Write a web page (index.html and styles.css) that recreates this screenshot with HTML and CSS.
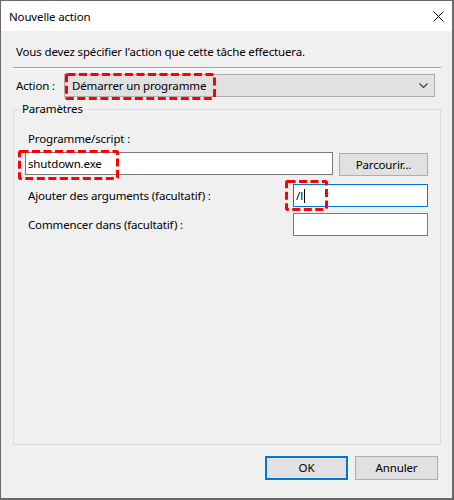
FILE: index.html
```html
<!DOCTYPE html>
<html lang="fr">
<head>
<meta charset="utf-8">
<title>Nouvelle action</title>
<link rel="stylesheet" href="styles.css">
</head>
<body>
<div class="window">
  <div class="titlebar">
    <span class="title">Nouvelle action</span>
    <svg class="close" width="11" height="11" viewBox="0 0 11 11"><path d="M0.5 0.5L10.5 10.5M10.5 0.5L0.5 10.5" stroke="#000" stroke-width="1" fill="none"/></svg>
  </div>
  <div class="body">
    <p class="desc">Vous devez spécifier l'action que cette tâche effectuera.</p>
    <div class="sep"></div>
    <div class="action-row">
      <span class="action-label">Action :</span>
      <div class="combo">
        <span class="combo-text">Démarrer un programme</span>
        <svg class="chevron" width="9" height="5" viewBox="0 0 9 5"><path d="M0.5 0.5L4.5 4.5L8.5 0.5" stroke="#404040" stroke-width="1.2" fill="none"/></svg>
        <svg class="mark mark-combo" width="151" height="27"><rect x="1.5" y="1.5" width="148" height="24" rx="1"/></svg>
      </div>
    </div>
    <fieldset class="params">
      <legend>Paramètres</legend>
      <div class="field-label">Programme/script :</div>
      <div class="prog-row">
        <div class="field field-wide">
          <span>shutdown.exe</span>
          <svg class="mark mark-prog" width="101" height="30"><rect x="1.5" y="1.5" width="98" height="27" rx="1"/></svg>
        </div>
        <div class="btn btn-browse">Parcourir...</div>
      </div>
      <div class="opt-row opt-args">
        <span class="opt-label">Ajouter des arguments (facultatif) :</span>
        <div class="field field-small field-focus">
          <span>/l</span><span class="caret"></span>
          <svg class="mark mark-args" width="43" height="31"><rect x="1.5" y="1.5" width="40" height="28" rx="1"/></svg>
        </div>
      </div>
      <div class="opt-row opt-start">
        <span class="opt-label">Commencer dans (facultatif) :</span>
        <div class="field field-small"></div>
      </div>
    </fieldset>
  </div>
  <div class="footer">
    <div class="btn btn-ok">OK</div>
    <div class="btn btn-cancel">Annuler</div>
  </div>
</div>
</body>
</html>
```

FILE: styles.css
```css
* { box-sizing: border-box; }
html, body { margin: 0; padding: 0; }
body {
  background: #6b6b6b;
  width: 454px;
  height: 500px;
  font-family: "Noto Sans", "Open Sans", sans-serif;
  font-size: 11.5px;
  letter-spacing: -0.15px;
  color: #000;
}
.window {
  width: 453px;
  height: 499px;
  border: 1px solid #6a6a6a;
  background: #f0f0f0;
  display: flex;
  flex-direction: column;
}
.titlebar {
  height: 30px;
  background: #fff;
  display: flex;
  align-items: center;
  padding: 0 8px 0 8px;
  flex: none;
}
.title {
  flex: 1;
  line-height: 16px;
  padding-top: 1px;
}
.close {
  display: block;
  margin-top: 1px;
}
.body {
  flex: 1;
  display: flex;
  flex-direction: column;
  padding: 13px 11px 0 12px;
}
.desc {
  margin: 0 0 0 3px;
  line-height: 16px;
  height: 16px;
}
.sep {
  margin-top: 7px;
  height: 2px;
  border-top: 1px solid #a0a0a0;
  border-bottom: 1px solid #fff;
  width: 428px;
}
.action-row {
  margin-top: 5px;
  display: flex;
  align-items: center;
  height: 23px;
}
.action-label {
  width: 51px;
  padding-left: 3px;
  line-height: 16px;
  flex: none;
}
.combo {
  position: relative;
  width: 371px;
  height: 23px;
  background: #e1e1e1;
  border: 1px solid #adadad;
  display: flex;
  align-items: center;
  padding-left: 7px;
}
.combo-text {
  flex: 1;
  line-height: 16px;
}
.chevron {
  display: block;
  margin-right: 6px;
}
.mark {
  position: absolute;
  overflow: visible;
}
.mark rect {
  fill: none;
  stroke: #f00;
  stroke-width: 3;
  stroke-dasharray: 8 3.5;
}
.mark-combo { left: 0; top: -2px; }
.mark-prog { left: -8px; top: -3px; }
.mark-args { left: -9px; top: -5px; }
.params {
  flex: 1;
  margin: 4px 0 0 0;
  padding: 0 12px 0 11px;
  border: 1px solid #dcdcdc;
  min-width: 0;
  width: 428px;
  display: flex;
  flex-direction: column;
}
.params legend {
  padding: 0 2px;
  margin-left: -5px;
  line-height: 16px;
}
.field-label {
  margin-top: 14px;
  padding-left: 3px;
  line-height: 16px;
}
.prog-row {
  margin-top: 5px;
  display: flex;
  align-items: flex-start;
}
.field {
  position: relative;
  height: 23px;
  background: #fff;
  border: 1px solid #7a7a7a;
  display: flex;
  align-items: center;
  padding-left: 2px;
  line-height: 16px;
}
.field-wide { width: 308px; }
.field-small { width: 135px; }
.field-focus { border-color: #0078d7; }
.caret {
  display: inline-block;
  width: 1px;
  height: 14px;
  background: #000;
  margin-left: 1px;
}
.btn {
  height: 23px;
  background: #e1e1e1;
  border: 1px solid #adadad;
  display: flex;
  align-items: center;
  justify-content: center;
  line-height: 16px;
}
.btn-browse {
  width: 89px;
  margin-left: 6px;
  margin-top: 1px;
}
.opt-row {
  display: flex;
  align-items: center;
  justify-content: space-between;
}
.opt-label {
  padding-left: 3px;
  line-height: 16px;
}
.opt-args { margin-top: 8px; }
.opt-start { margin-top: 6px; }
.footer {
  flex: none;
  height: 53px;
  display: flex;
  justify-content: flex-end;
  align-items: flex-start;
  gap: 7px;
  padding: 11px 14px 0 0;
}
.footer .btn {
  width: 83px;
  height: 24px;
}
.btn-ok {
  border: 2px solid #0078d7;
}
```
